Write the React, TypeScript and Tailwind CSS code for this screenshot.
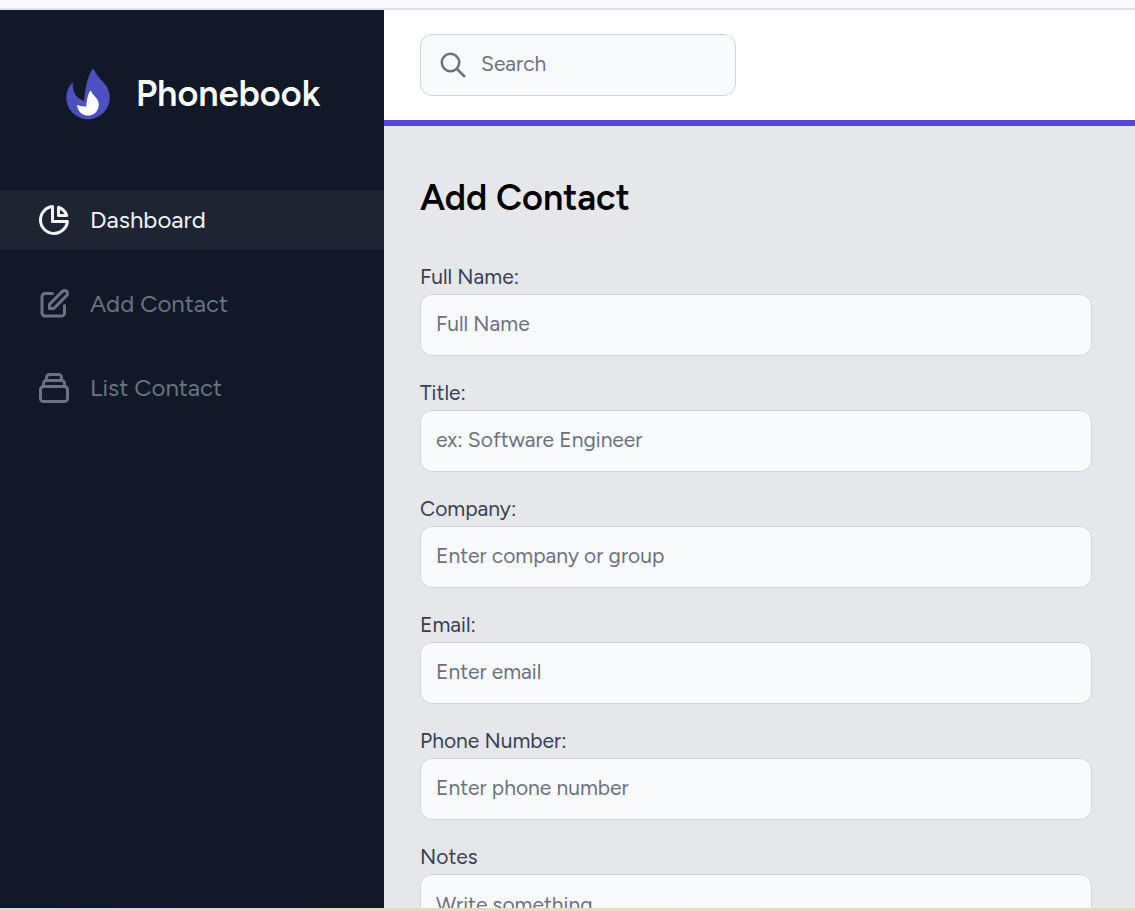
import type { ReactNode } from "react";

type IconProps = { paths: string[]; className: string };

function OutlineIcon({ paths, className }: IconProps) {
  return (
    <svg
      className={className}
      viewBox="0 0 24 24"
      fill="none"
      stroke="currentColor"
      strokeWidth={2}
      strokeLinecap="round"
      strokeLinejoin="round"
      aria-hidden="true"
    >
      {paths.map((d) => (
        <path key={d} d={d} />
      ))}
    </svg>
  );
}

const chartPie = [
  "M11 3.055A9.001 9.001 0 1020.945 13H11V3.055z",
  "M20.488 9H15V3.512A9.025 9.025 0 0120.488 9z",
];
const pencil = [
  "M11 5H6a2 2 0 00-2 2v11a2 2 0 002 2h11a2 2 0 002-2v-5m-1.414-9.414a2 2 0 112.828 2.828L11.828 15H9v-2.828l8.586-8.586z",
];
const collection = [
  "M19 11H5m14 0a2 2 0 012 2v6a2 2 0 01-2 2H5a2 2 0 01-2-2v-6a2 2 0 012-2m14 0V9a2 2 0 00-2-2M5 11V9a2 2 0 012-2m0 0V5a2 2 0 012-2h6a2 2 0 012 2v2M7 7h10",
];
const magnifier = [
  "M21 21L15 15M17 10C17 13.866 13.866 17 10 17C6.134 17 3 13.866 3 10C3 6.134 6.134 3 10 3C13.866 3 17 6.134 17 10Z",
];

function FlameLogo() {
  return (
    <svg className="size-18" viewBox="0 0 512 512" fill="none" aria-hidden="true">
      <path
        d="M364.61 390.213C304.625 450.196 207.37 450.196 147.386 390.213C117.394 360.22 102.398 320.911 102.398 281.6C102.398 242.291 117.394 202.981 147.386 172.989C147.386 230.4 153.6 281.6 230.4 307.2C230.4 256 256 102.4 294.4 76.7999C320 128 334.618 142.997 364.608 172.989C394.601 202.981 409.597 242.291 409.597 281.6C409.597 320.911 394.601 360.22 364.61 390.213Z"
        fill="#4C51BF"
        stroke="#4C51BF"
        strokeWidth="2"
        strokeLinejoin="round"
      />
      <path
        d="M201.694 387.105C231.686 417.098 280.312 417.098 310.305 387.105C325.301 372.109 332.8 352.456 332.8 332.8C332.8 313.144 325.301 293.491 310.305 278.495C295.309 263.498 288 256 275.2 230.4C256 243.2 243.201 320 243.201 345.6C201.694 345.6 179.2 332.8 179.2 332.8C179.2 352.456 186.698 372.109 201.694 387.105Z"
        fill="white"
      />
    </svg>
  );
}

const links = [
  { label: "Dashboard", icon: chartPie, active: true },
  { label: "Add Contact", icon: pencil, active: false },
  { label: "List Contact", icon: collection, active: false },
];

const fields = [
  { id: "name", label: "Full Name:", placeholder: "Full Name", type: "text" },
  { id: "title", label: "Title:", placeholder: "ex: Software Engineer", type: "text" },
  { id: "company", label: "Company:", placeholder: "Enter company or group", type: "text" },
  { id: "email", label: "Email:", placeholder: "Enter email", type: "email" },
  { id: "phone", label: "Phone Number:", placeholder: "Enter phone number", type: "tel" },
];

function Field({ id, label, children }: { id: string; label: string; children: ReactNode }) {
  return (
    <div>
      <label htmlFor={id} className="block pb-1 text-[21px] leading-[26px] text-[#374151]">
        {label}
      </label>
      {children}
    </div>
  );
}

export default function App() {
  return (
    <div className="flex h-screen flex-col font-['Figtree',Lato,sans-serif] antialiased">
      <div className="h-2.5 shrink-0 border-b-2 border-[#dfe2ea] bg-[#f9f9ff]" />
      <div className="flex min-h-0 flex-1">
        <aside className="w-96 shrink-0 bg-[#111827] pt-12">
          <div className="flex items-center justify-center">
            <FlameLogo />
            <span className="mx-3 text-4xl font-semibold text-white">Phonebook</span>
          </div>
          <nav className="mt-15 flex flex-col gap-6">
            {links.map(({ label, icon, active }) => (
              <a
                key={label}
                href="#"
                className={
                  active
                    ? "flex items-center gap-4.5 bg-[#1d2432] px-9 py-3 text-[#f3f4f6]"
                    : "flex items-center gap-4.5 px-9 py-3 text-[#6b7280]"
                }
              >
                <OutlineIcon paths={icon} className="size-9" />
                <span className="text-2xl leading-9">{label}</span>
              </a>
            ))}
          </nav>
        </aside>
        <div className="flex min-w-0 flex-1 flex-col">
          <header className="shrink-0 border-b-6 border-[#4f46e5] bg-white px-9 py-6">
            <div className="relative w-[316px]">
              <OutlineIcon
                paths={magnifier}
                className="absolute top-4 left-4.5 size-7.5 text-[#6b7280]"
              />
              <input
                type="search"
                aria-label="Search"
                placeholder="Search"
                className="h-[62px] w-full rounded-xl border border-[#d1d5db] bg-[#f9fafb] pr-4 pb-1 pl-15 text-[21px] placeholder:text-[#6b7280]"
              />
            </div>
          </header>
          <main className="min-h-0 flex-1 overflow-hidden bg-[#e5e7eb] pt-12 pr-[43px] pl-9">
            <h1 className="text-4xl leading-12 font-semibold text-black">Add Contact</h1>
            <form className="mt-10.5 flex flex-col gap-6">
              {fields.map(({ id, label, placeholder, type }) => (
                <Field key={id} id={id} label={label}>
                  <input
                    id={id}
                    type={type}
                    placeholder={placeholder}
                    className="block h-[62px] w-full rounded-xl border border-[#d1d5db] bg-[#f9fafb] px-[15px] pb-1 text-[21px] placeholder:text-[#6b7280]"
                  />
                </Field>
              ))}
              <Field id="notes" label="Notes">
                <textarea
                  id="notes"
                  rows={4}
                  placeholder="Write something"
                  className="block w-full resize-none rounded-xl border border-[#d1d5db] bg-[#f9fafb] px-[15px] py-[15px] text-[21px] leading-[30px] placeholder:text-[#6b7280]"
                />
              </Field>
            </form>
          </main>
        </div>
      </div>
      <div className="h-[3px] shrink-0 bg-linear-to-r from-[#d9d9c0] via-[#e3e0bd] to-[#dedfbf]" />
    </div>
  );
}
